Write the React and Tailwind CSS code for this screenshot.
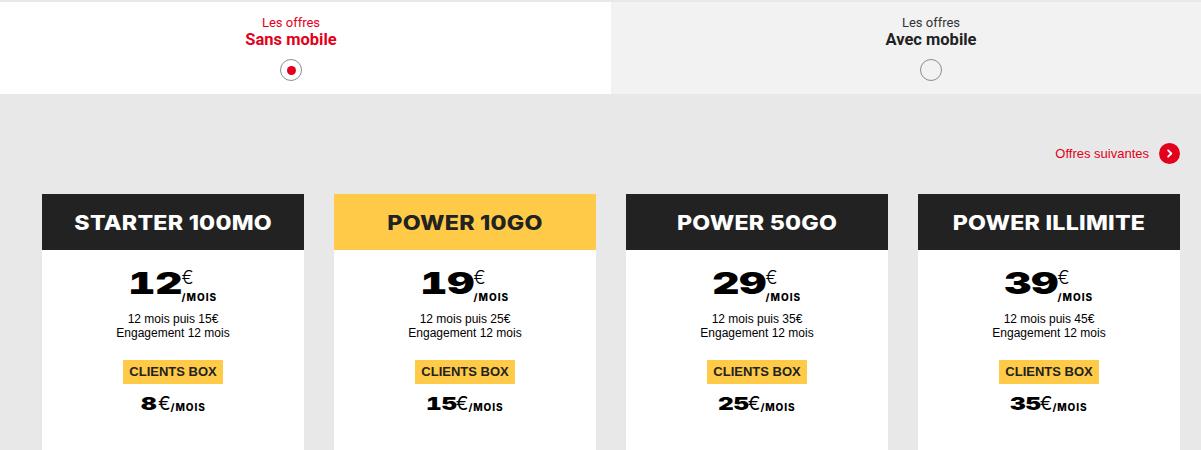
import React from "react";

const plans = [
  { name: "STARTER 100MO", price: "12", after: "12 mois puis 15€", box: "8", yellow: false },
  { name: "POWER 10GO", price: "19", after: "12 mois puis 25€", box: "15", yellow: true },
  { name: "POWER 50GO", price: "29", after: "12 mois puis 35€", box: "25", yellow: false },
  { name: "POWER ILLIMITE", price: "39", after: "12 mois puis 45€", box: "35", yellow: false },
];

function Card({ p }) {
  return (
    <div className="w-[262px] h-[300px] bg-white flex flex-col shrink-0">
      <div
        className={
          p.yellow
            ? "h-[56px] bg-[#ffca47] text-[#222222] flex items-center justify-center"
            : "h-[56px] bg-[#222222] text-white flex items-center justify-center"
        }
      >
        <span className="inline-block scale-x-[1.16] font-['Inter',sans-serif] font-extrabold text-[20px] leading-[20px] tracking-[0.2px] mt-[2px]">
          {p.name}
        </span>
      </div>
      <div className="flex flex-col items-center">
        <div className="flex items-start mt-[18px] h-[37px] text-black">
          <span className="inline-block scale-x-[1.4] mx-[7px] font-['Inter',sans-serif] font-black tabular-nums text-[30px] leading-[30px]">
            {p.price}
          </span>
          <div className="flex flex-col">
            <span className="font-['Inter',sans-serif] font-light text-[18px] leading-[18px] mt-[1px]">€</span>
            <span className="font-['Inter',sans-serif] font-extrabold text-[10px] leading-[10px] tracking-[1px] mt-[5px]">
              /MOIS
            </span>
          </div>
        </div>
        <div className="mt-[7px] text-center font-['Liberation_Sans',Arial,sans-serif] text-[12px] leading-[14px] text-black">
          <div>{p.after}</div>
          <div>Engagement 12 mois</div>
        </div>
        <div className="mt-[20px] h-[24px] px-[6px] bg-[#ffca47] text-[#222222] flex items-center font-['Liberation_Sans',Arial,sans-serif] font-bold text-[13px]">
          CLIENTS BOX
        </div>
        <div className="mt-[11px] flex items-end text-black">
          <span className="inline-block scale-x-[1.35] mx-[3px] font-['Inter',sans-serif] font-black tabular-nums text-[18px] leading-[18px]">
            {p.box}
          </span>
          <span className="font-['Inter',sans-serif] font-normal text-[19px] leading-[18px]">€</span>
          <span className="font-['Inter',sans-serif] font-extrabold text-[10px] leading-[10px] tracking-[0.9px] mb-[1px]">
            /MOIS
          </span>
        </div>
      </div>
    </div>
  );
}

export default function App() {
  return (
    <div className="w-[1201px] h-[450px] overflow-hidden bg-[#e8e8e8] pt-[2px] font-['Roboto',sans-serif]">
      <div className="flex h-[92px]">
        <div className="w-[611px] bg-white flex flex-col items-center pr-[29px] pt-[14px]">
          <div className="text-[13px] leading-[14px] text-[#e3001b]">Les offres</div>
          <div className="text-[16.5px] leading-[20px] font-bold text-[#e3001b]">Sans mobile</div>
          <div className="mt-[9px] w-[22px] h-[22px] rounded-full border border-[#8c8c8c] flex items-center justify-center">
            <div className="w-[9px] h-[9px] rounded-full bg-[#e3001b]" />
          </div>
        </div>
        <div className="flex-1 bg-[#f2f2f2] flex flex-col items-center pl-[50px] pt-[14px]">
          <div className="text-[13px] leading-[14px] text-[#333333]">Les offres</div>
          <div className="text-[16.5px] leading-[20px] font-bold text-[#222222]">Avec mobile</div>
          <div className="mt-[9px] w-[22px] h-[22px] rounded-full border border-[#8c8c8c] bg-[#f2f2f2]" />
        </div>
      </div>
      <div className="flex justify-end items-center pr-[21px] mt-[49px] h-[21px]">
        <span className="font-['Liberation_Sans',Arial,sans-serif] text-[13px] text-[#e3001b] mr-[10px]">
          Offres suivantes
        </span>
        <span className="w-[21px] h-[21px] rounded-full bg-[#e3001b] flex items-center justify-center">
          <svg width="11" height="11" viewBox="0 0 24 24" fill="none" stroke="white" strokeWidth="4" strokeLinecap="round" strokeLinejoin="round">
            <path d="M9 5l7 7-7 7" />
          </svg>
        </span>
      </div>
      <div className="flex gap-[30px] pl-[42px] mt-[30px]">
        {plans.map((p) => (
          <Card key={p.name} p={p} />
        ))}
      </div>
    </div>
  );
}
